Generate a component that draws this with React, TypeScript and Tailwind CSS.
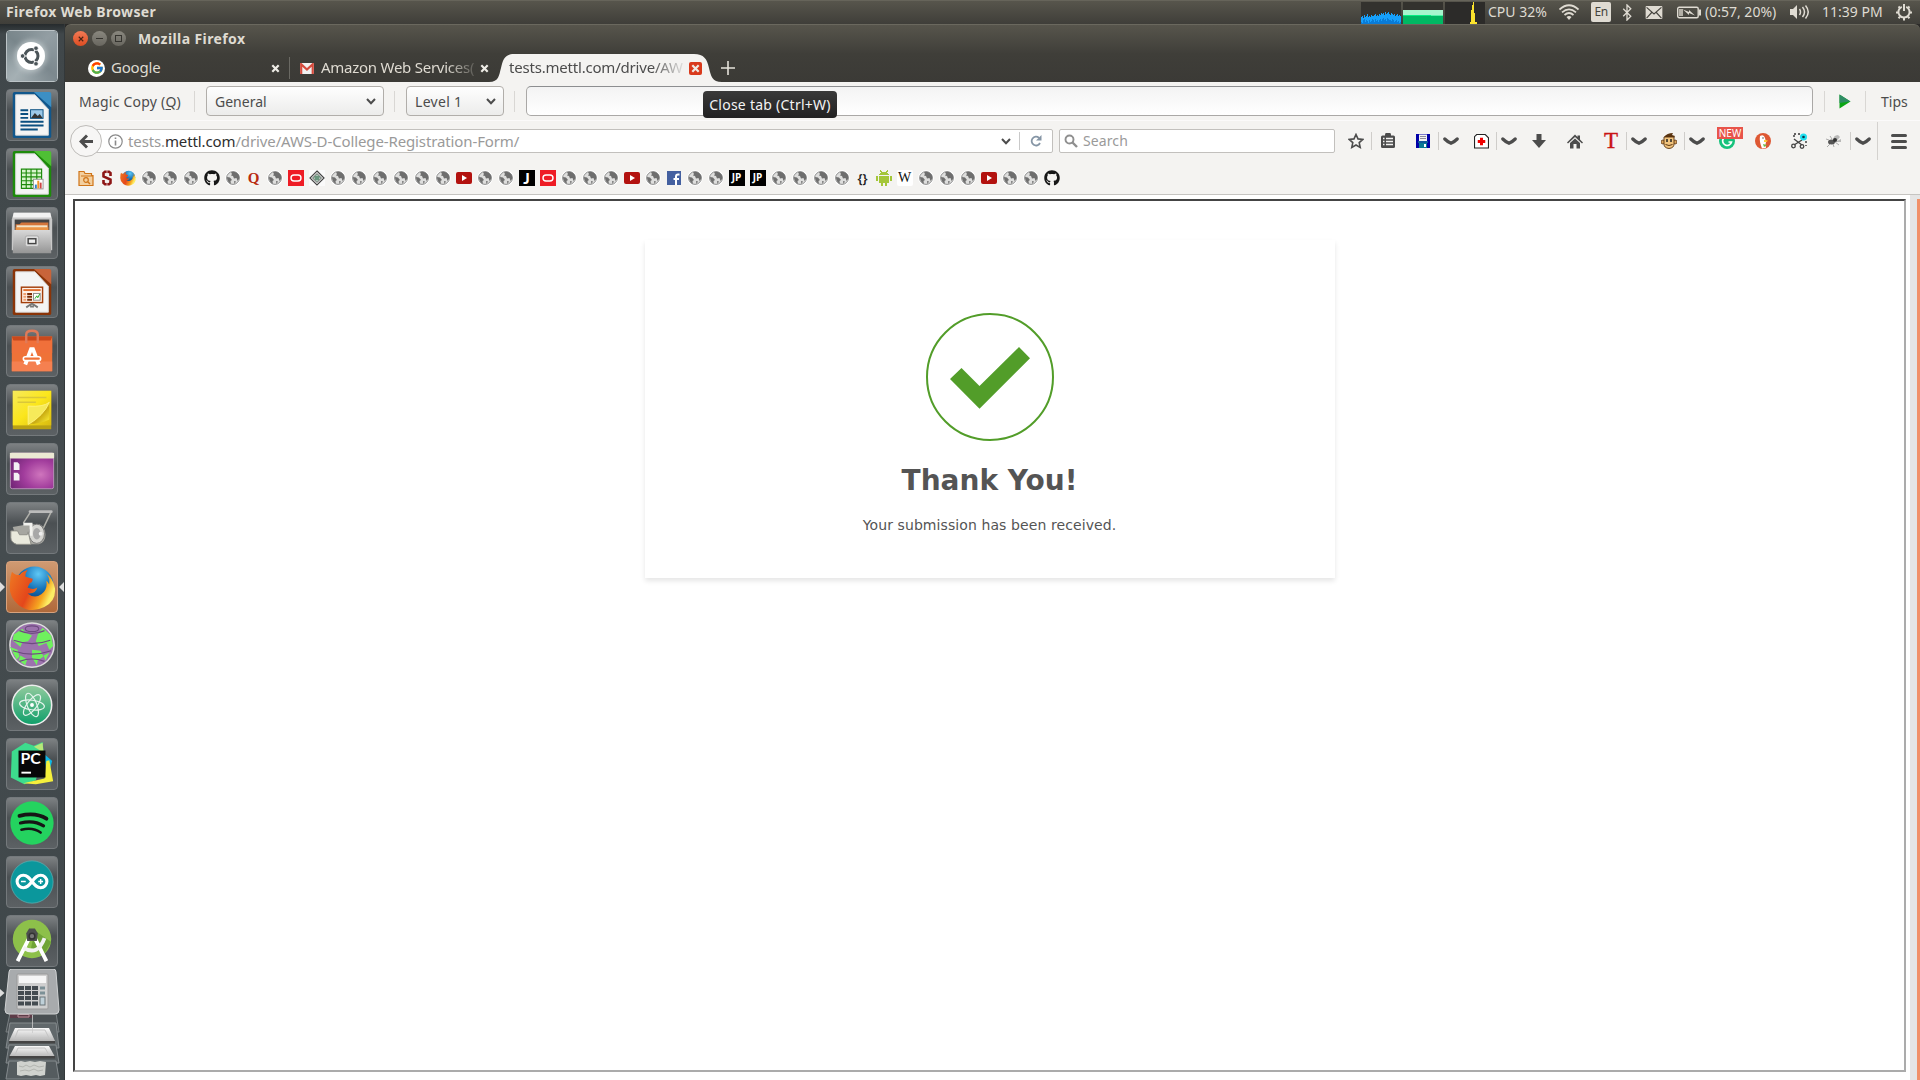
import type { ReactNode } from "react";
import { FcGoogle } from "react-icons/fc";
import { FaGithub } from "react-icons/fa";

const UI = "font-['Noto_Sans',sans-serif] whitespace-nowrap";

/* ---------- launcher artwork (52x52 canvas) ---------- */

function OfficeDoc({ dark, light, children }: { dark: string; light: string; children: ReactNode }) {
  return (
    <svg viewBox="0 0 52 52" className="size-[52px]">
      <path d="M8 2h25l13 14v32q0 2-2 2H8q-2 0-2-2V4q0-2 2-2z" fill={dark} />
      <path d="M28 2h16q2 0 2 2v14z" fill={light} />
      <path d="M9 5h20l14 15v27H9z" fill="#f4f4f4" stroke="#d5d5d5" />
      {children}
    </svg>
  );
}

function Writer() {
  return (
    <OfficeDoc dark="#11578c" light="#3c8fc4">
      <path d="M14 21h8M14 25h8M14 29h8M14 33h24M14 37h24M14 41h18" stroke="#0b4f80" strokeWidth="2" />
      <rect x="24.500" y="20.500" width="13" height="9" fill="#9cc8e8" stroke="#0b4f80" />
      <path d="M25 29l4-5 3 3 2-2 3 4z" fill="#333" />
    </OfficeDoc>
  );
}

function Calc() {
  return (
    <OfficeDoc dark="#1d8a0b" light="#4fbf35">
      <path d="M15 21h21v20H15z" fill="#d8f5cd" />
      <path d="M15 21h21v20H15zM15 25h21M15 29h21M15 33h21M15 37h21M20 21v20M25 21v20M31 21v20" fill="none" stroke="#1d8a0b" strokeWidth="1.200" />
      <rect x="27.500" y="31.500" width="10" height="10" fill="#fff" stroke="#999" />
      <path d="M30 41v-4" stroke="#3080c8" strokeWidth="2" />
      <path d="M32.500 41v-8" stroke="#f0962a" strokeWidth="2" />
      <path d="M35 41v-6" stroke="#c44" strokeWidth="2" />
    </OfficeDoc>
  );
}

function Impress() {
  return (
    <OfficeDoc dark="#8a3408" light="#c8643a">
      <rect x="15" y="21" width="22" height="16" fill="#fff3ea" stroke="#a33e0a" strokeWidth="1.500" />
      <path d="M17 24h18" stroke="#e07030" strokeWidth="2" />
      <path d="M17 28h3M17 31h3M17 34h3" stroke="#f0a070" strokeWidth="2" />
      <path d="M21 28h5M21 31h5M21 34h5" stroke="#7a2b05" strokeWidth="2" />
      <rect x="27.500" y="27.500" width="7" height="7" fill="#fff" stroke="#888" />
      <path d="M29 33l2-3 1 2 2-4" fill="none" stroke="#2a2" />
      <path d="M20 42l6-4 6 4M24 41h4" stroke="#777" strokeWidth="2" fill="none" />
    </OfficeDoc>
  );
}

function Files() {
  return (
    <svg viewBox="0 0 52 52" className="size-[52px]">
      <defs>
        <linearGradient id="cab" x1="0" y1="0" x2="0" y2="1">
          <stop offset="0" stopColor="#d8d8d8" />
          <stop offset="1" stopColor="#959595" />
        </linearGradient>
      </defs>
      <path d="M7 5h38l2 7v32H5V12z" fill="#c9c9c9" />
      <path d="M7 5h38l1 5H6z" fill="#f2f2f2" />
      <rect x="8" y="12" width="36" height="12" fill="#444" />
      <path d="M9 17h4l2-2h28v8H9z" fill="#d3753a" />
      <rect x="10" y="18" width="32" height="4" fill="#f3e4c8" />
      <path d="M9 20h34v3H9z" fill="#eb9445" />
      <path d="M7 23h38l1 24H6z" fill="url(#cab)" />
      <rect x="19" y="29" width="14" height="11" rx="2" fill="#ddd" stroke="#aaa" />
      <rect x="22" y="32" width="8" height="5" fill="#eee" stroke="#444" strokeWidth="1.500" />
    </svg>
  );
}

function Software() {
  return (
    <svg viewBox="0 0 52 52" className="size-[52px]">
      <path d="M5 11h42v36H5z" fill="#ef7238" />
      <path d="M5 11h42l-2 5H7z" fill="#c9481c" />
      <path d="M5 15h42v13H5z" fill="#f0703a" />
      <path d="M5 37h42v10H5z" fill="#f58050" />
      <path d="M20 18V9q0-4 6-4t6 4v9" fill="none" stroke="#e07a58" strokeWidth="2.500" />
      <path d="M19 40l6-16h2l6 16" fill="none" stroke="#fff" strokeWidth="4" />
      <rect x="17" y="32" width="18" height="4" rx="2" fill="#ef7238" stroke="#fff" strokeWidth="1.600" />
    </svg>
  );
}

function Notes() {
  return (
    <svg viewBox="0 0 52 52" className="size-[52px]">
      <defs>
        <linearGradient id="note" x1="0" y1="0" x2="1" y2="1">
          <stop offset="0" stopColor="#f6ea5c" />
          <stop offset="0.500" stopColor="#fbe61c" />
          <stop offset="1" stopColor="#d9bb10" />
        </linearGradient>
        <linearGradient id="curl" x1="0.300" y1="0.300" x2="0.900" y2="0.900">
          <stop offset="0" stopColor="#fdf48e" />
          <stop offset="0.500" stopColor="#c9ab12" />
          <stop offset="1" stopColor="#f6e530" />
        </linearGradient>
      </defs>
      <rect x="6" y="6" width="40" height="40" fill="#b9a114" />
      <rect x="6" y="6" width="40" height="36" fill="url(#note)" />
      <path d="M11 13h30M11 18h19" stroke="#d9c73a" strokeWidth="1.500" />
      <path d="M22 41V22q14 2 22-4v18q-8 4-22 5z" fill="url(#curl)" />
      <path d="M22 41V22q16 1 22-4-6 14-22 23z" fill="#f6ea5a" stroke="#fff27a" />
    </svg>
  );
}

function Desktop() {
  return (
    <svg viewBox="0 0 52 52" className="size-[52px]">
      <defs>
        <radialGradient id="desk" cx="0.700" cy="0.600" r="0.800">
          <stop offset="0" stopColor="#cf75bd" />
          <stop offset="0.500" stopColor="#a13c9c" />
          <stop offset="1" stopColor="#6d2373" />
        </radialGradient>
      </defs>
      <rect x="3.500" y="9.500" width="45" height="37" rx="2" fill="url(#desk)" stroke="#b891b8" />
      <rect x="3" y="9" width="46" height="6" rx="1" fill="#ebe9d3" />
      <path d="M7 19h4l2 2v6H7zM7 30h4l2 2v6H7z" fill="#f3f0f3" />
    </svg>
  );
}

function Scroller() {
  return (
    <svg viewBox="0 0 52 52" className="size-[52px]">
      <path d="M17 21l7-11M35 32l11-23" stroke="#b0b0aa" strokeWidth="1.600" fill="none" />
      <path d="M24 9h22" stroke="#bbb" strokeWidth="3" strokeLinecap="round" />
      <path d="M6 25l16-3h12q6 3 6 11t-7 10H12z" fill="#a6a6a0" />
      <ellipse cx="31" cy="32" rx="8" ry="10" fill="#d6d6d2" stroke="#777" />
      <ellipse cx="31" cy="32" rx="4" ry="6" fill="#a8a8a8" />
      <circle cx="35" cy="32" r="2" fill="#eee" />
      <path d="M4 29h7l2 4h8l1-3 3 13H10q-6-2-6-7z" fill="#e9e9dc" stroke="#8f8f88" />
      <path d="M17 22h8v12" stroke="#f2f2ee" strokeWidth="3" fill="none" />
    </svg>
  );
}

function FirefoxLogo({ className }: { className: string }) {
  return (
    <svg viewBox="0 0 48 48" className={className}>
      <defs>
        <radialGradient id="ffblue" cx="0.600" cy="0.200" r="0.800">
          <stop offset="0" stopColor="#5fc8f5" />
          <stop offset="0.500" stopColor="#1673b9" />
          <stop offset="1" stopColor="#0c2f64" />
        </radialGradient>
        <linearGradient id="ffor" x1="0" y1="0" x2="1" y2="0.400">
          <stop offset="0" stopColor="#ef7a22" />
          <stop offset="0.550" stopColor="#e4471b" />
          <stop offset="0.850" stopColor="#f6a821" />
          <stop offset="1" stopColor="#fcec64" />
        </linearGradient>
      </defs>
      <circle cx="26" cy="22" r="19.500" fill="url(#ffblue)" />
      <path
        d="M3 8q3 4 8 3 3-4 8-5-3 4-2 7l7 2q1 3-3 5l-2 4q6 3 10 0-2 7-10 6 7 6 14 1 7-5 5-14 2 1 3 4 1-7-3-11 7 4 9 15 1 13-11 19-14 7-26-2Q-1 33 1 20q0-7 2-12z"
        fill="url(#ffor)"
      />
    </svg>
  );
}

function TorGlobe() {
  return (
    <svg viewBox="0 0 52 52" className="size-[52px]">
      <circle cx="26" cy="25" r="23" fill="#9c73ad" stroke="#ddd" strokeWidth="1.500" />
      <path d="M7 14l9-6 3 4 7 3-4 6-6 1-2 5-8-7zM32 14l5-7 9 8 2 11-4 4-3-7-8 3-3-5zM3 27l8 3 2 7-3 3zM26 30l9 1 3 6-6 4-1 5-5-8zM14 36l7 4-2 6-7-5zM38 36l6-3-4 8z" fill="#6ff05e" />
      <g fill="none" stroke="#6e4a80" strokeWidth="1.200">
        <path d="M13 10q13 6 26 0M7 20q19 7 38 0M6 31q20 7 40 0M13 42q13-5 26 0" />
        <ellipse cx="26" cy="8" rx="7" ry="3" />
      </g>
    </svg>
  );
}

function AtomIcon() {
  return (
    <svg viewBox="0 0 52 52" className="size-[52px]">
      <defs>
        <linearGradient id="atom" x1="0" y1="0" x2="0" y2="1">
          <stop offset="0" stopColor="#92cb9e" />
          <stop offset="1" stopColor="#0f9f6a" />
        </linearGradient>
      </defs>
      <circle cx="26" cy="26" r="20.500" fill="url(#atom)" stroke="#ededed" strokeWidth="1.600" />
      <g fill="none" stroke="#e4f4ec" strokeWidth="1.200">
        <ellipse cx="26" cy="26" rx="13" ry="5" transform="rotate(8 26 26)" />
        <ellipse cx="26" cy="26" rx="13" ry="5" transform="rotate(68 26 26)" />
        <ellipse cx="26" cy="26" rx="13" ry="5" transform="rotate(128 26 26)" />
      </g>
      <circle cx="26" cy="26" r="2" fill="#fff" />
    </svg>
  );
}

function PyCharm() {
  return (
    <svg viewBox="0 0 52 52" className="size-[52px]">
      <path d="M5 13l14-9 9 3 9-4 1 10-8 30-12 4-14-7z" fill="#3ddc8d" />
      <path d="M28 8l9-4 1 10z" fill="#b7e778" />
      <path d="M38 15l9 8-5 16z" fill="#10b8e8" />
      <path d="M17 46l22-5 2-18 3-1 4 22-18 3z" fill="#f5f03c" />
      <rect x="12" y="12" width="28" height="28" fill="#080808" />
      <text x="14" y="26.500" fontSize="16.500" fontWeight="700" fill="#fff" fontFamily="Lato">PC</text>
      <path d="M15 35h10" stroke="#fff" strokeWidth="2" />
    </svg>
  );
}

function Spotify() {
  return (
    <svg viewBox="0 0 52 52" className="size-[52px]">
      <circle cx="26" cy="26" r="22.500" fill="#24d35f" />
      <g fill="none" stroke="#161616" strokeLinecap="round">
        <path d="M13 18.500q17-4 28 3" strokeWidth="4" />
        <path d="M14 26q14-3.500 24 3" strokeWidth="3.300" />
        <path d="M15 33q12-3 20 3" strokeWidth="2.600" />
      </g>
    </svg>
  );
}

function Arduino() {
  return (
    <svg viewBox="0 0 52 52" className="size-[52px]">
      <circle cx="26" cy="26" r="22" fill="#0b979c" stroke="#5aaeb0" strokeWidth="0.800" />
      <path d="M26 25.500c-3-4-5-6.500-9-6.500a6.500 6.500 0 0 0 0 13c4 0 6-2.500 9-6.500 3-4 5-6.500 9-6.500a6.500 6.500 0 0 1 0 13c-4 0-6-2.500-9-6.500z" fill="none" stroke="#fff" strokeWidth="3.200" />
      <path d="M14.500 25.500h5M32.500 25.500h5M35 23v5" stroke="#fff" strokeWidth="1.500" />
    </svg>
  );
}

function AndroidStudio() {
  return (
    <svg viewBox="0 0 52 52" className="size-[52px]">
      <circle cx="26" cy="24" r="20" fill="#8dc04a" />
      <path d="M29 15l17 12-7 12-14-6z" fill="#6fa336" />
      <path d="M23 23L11 47M29 23l12 24" stroke="#fff" strokeWidth="4" />
      <path d="M17 33q15 9 22-10" stroke="#f2f2f2" strokeWidth="4" fill="none" />
      <path d="M23 13h6l3 5-1 8h-10l-1-8z" fill="#4d4f4e" />
      <circle cx="26" cy="21" r="3" fill="#777" stroke="#333" strokeWidth="1.500" />
    </svg>
  );
}

function Dash() {
  return (
    <div className="flex size-[50px] items-center justify-center bg-[conic-gradient(from_40deg,#939ea3,#7c888e,#a5b0b4,#79868b,#939ea3)]">
      <div className="-ml-[3px] flex size-[28px] items-center justify-center rounded-full bg-white shadow-[0_0_5px_2px_rgba(210,218,220,0.6)]">
        <svg viewBox="0 0 22 22" className="size-[22px]">
          <circle cx="11.500" cy="11" r="6.500" fill="none" stroke="#4b5458" strokeWidth="3" />
          <path d="M11.500 11L3 11M11.500 11l4.500 8M11.500 11l4.500-8" stroke="#fff" strokeWidth="1.200" />
          <g fill="#4b5458" stroke="#fff" strokeWidth="0.800">
            <circle cx="2.600" cy="11" r="2.300" />
            <circle cx="16" cy="3.200" r="2.300" />
            <circle cx="16" cy="18.800" r="2.300" />
          </g>
        </svg>
      </div>
    </div>
  );
}

function FoldedStack() {
  return (
    <svg viewBox="0 0 65 111" className="h-[111px] w-[65px]">
      <defs>
        <linearGradient id="metal" x1="0" y1="0" x2="0" y2="1">
          <stop offset="0" stopColor="#fafafa" />
          <stop offset="1" stopColor="#b4b4b4" />
        </linearGradient>
      </defs>
      <path d="M10 44h46l3 19H6z" fill="#4a5053" stroke="#7a8083" />
      <path d="M10 45h22v4H10z" fill="#5d3c48" />
      <path d="M18 45.500h11v2.500H18z" fill="none" stroke="#b98f9a" />
      <path d="M10 54h46l3 25H6z" fill="#61686b" stroke="#858b8e" />
      <path d="M9 76h47l3 18H6z" fill="#555c5f" stroke="#858b8e" />
      <path d="M9 92h47l3 18H6z" fill="#555c5f" stroke="#858b8e" />
      <path d="M15 59h34l6 13H9z" fill="url(#metal)" />
      <path d="M9 72h46v2.500H9z" fill="#444" />
      <path d="M18 61h27l4 8H15z" fill="none" stroke="#c4c4c4" />
      <path d="M32.500 46v18" stroke="#ccc" strokeWidth="0.800" />
      <path d="M15 77h34l6 11H9z" fill="url(#metal)" />
      <path d="M9 87h46v2.500H9z" fill="#444" />
      <path d="M18 79h27l4 7H15z" fill="none" stroke="#c4c4c4" />
      <path d="M17 93l4-1 4 1 5-1 5 1 5-1 6 1-1 13-5 1-4-1-5 1-5-1-5 1-4-1z" fill="#d0d2ce" />
      <path d="M19 97l4 1 3-2 4 2 4-2 5 2 5-1M20 102l5-1 4 1 5-2 4 2 5-1" stroke="#a9aca7" strokeWidth="0.800" fill="none" />
      <path d="M0 20l4.500 4L0 28z" fill="#ddd" />
      <path d="M9 3q0-3 3-3h41q3 0 3 3l3 38q0 4-4 4H9q-4 0-4-4z" fill="#a8abad" stroke="#cfd1d2" />
      <rect x="17" y="5" width="31" height="35" rx="1" fill="#cfcfcf" stroke="#999" />
      <rect x="19" y="7" width="27" height="7" fill="#f6f6f6" />
      <path d="M18 19h21M18 24h21M18 29h21M18 34.500h21" stroke="#444b50" strokeWidth="3.800" strokeDasharray="6 1" />
      <path d="M40 19h5M40 24h5" stroke="#7c9096" strokeWidth="3" />
      <rect x="40" y="28" width="5" height="8" fill="#bfd0d8" stroke="#6b7478" />
    </svg>
  );
}

const launcher: { name: string; art: ReactNode; active?: boolean }[] = [
  { name: "writer", art: <Writer /> },
  { name: "calc", art: <Calc /> },
  { name: "files", art: <Files /> },
  { name: "impress", art: <Impress /> },
  { name: "software", art: <Software /> },
  { name: "notes", art: <Notes /> },
  { name: "desktop", art: <Desktop /> },
  { name: "scroller", art: <Scroller /> },
  { name: "firefox", art: <FirefoxLogo className="size-[47px]" />, active: true },
  { name: "tor", art: <TorGlobe /> },
  { name: "atom", art: <AtomIcon /> },
  { name: "pycharm", art: <PyCharm /> },
  { name: "spotify", art: <Spotify /> },
  { name: "arduino", art: <Arduino /> },
  { name: "studio", art: <AndroidStudio /> },
];

function Launcher() {
  return (
    <aside className="flex h-[1056px] w-[65px] shrink-0 flex-col overflow-hidden border-r border-[#33383a] bg-[linear-gradient(#262b2d,#40474a_10px,#454c4f_50%,#3e4649)] pt-[6px]">
      <div className="mb-[7px] ml-[6px] size-[52px] shrink-0 overflow-hidden rounded-[4px] border border-[#bcc4c7]">
        <Dash />
      </div>
      {launcher.map((item) => (
        <div key={item.name} className="relative mb-[7px] h-[52px] w-[64px] shrink-0 pl-[6px]">
          {item.active && (
            <svg viewBox="0 0 65 52" className="absolute left-0 top-0 h-[52px] w-[65px]">
              <path d="M0 21l5 5-5 5zM64 21l-5 5 5 5z" fill="#dedede" />
            </svg>
          )}
          <div
            className={
              item.active
                ? "flex size-[52px] items-center justify-center rounded-[4px] border border-[#d8a27d] bg-[linear-gradient(#cf9a72,#b0693a)]"
                : "flex size-[52px] items-center justify-center rounded-[4px] border border-[#74797c] bg-[linear-gradient(#7d8183,#4b5053_40%,#5c6164)]"
            }
          >
            {item.art}
          </div>
        </div>
      ))}
      <div className="-mt-[5px] h-[111px] w-[65px] shrink-0"><FoldedStack /></div>
    </aside>
  );
}

/* ---------- top panel ---------- */

const cpuBars = [8, 9, 7, 10, 8, 9, 11, 8, 9, 8, 10, 9, 9, 10, 11, 9, 10, 9, 11, 10, 12, 11, 12, 10, 13, 11, 12, 13, 11, 10, 12, 11, 10, 11, 9, 10, 11, 9, 10, 9];
const cpuDark = [3, 2, 5, 6, 3, 5, 4, 2, 5, 3, 4, 6, 5, 3, 6, 4, 5, 3, 5, 6, 4, 6, 7, 5, 6, 4, 7, 6, 5, 5, 4, 6, 5, 3, 4, 5, 3, 4, 2, 3];

function PanelGraphs() {
  return (
    <div className="flex gap-[2px]">
      <svg viewBox="0 0 40 22" className="h-[22px] w-[40px] bg-[#33322e]" shapeRendering="crispEdges">
        {cpuBars.map((h, i) => (
          <rect key={i} x={i} y={22 - h + 1} width="1" height={h} fill="#16a0fb" />
        ))}
        {cpuDark.map((h, i) => (
          <rect key={i} x={i} y={22 - h + 1} width="1" height={h} fill="#0a7bd6" />
        ))}
      </svg>
      <svg viewBox="0 0 40 22" className="h-[22px] w-[40px] bg-[#33322e]">
        <rect y="8" width="40" height="14" fill="#a6f5cd" />
        <rect y="13" width="28" height="2" fill="#06ee83" />
        <rect x="28" y="13.500" width="12" height="1.500" fill="#06ee83" />
        <rect y="14" width="40" height="8" fill="#00b863" />
      </svg>
      <svg viewBox="0 0 40 22" className="h-[22px] w-[40px] bg-[#2c2b29]">
        <path d="M25 22v-2h1V8h1V3h1V0h1v11h1v9h2v2z" fill="#fbe32d" />
      </svg>
    </div>
  );
}

function TopPanel() {
  return (
    <header className="flex h-[24px] items-center border-t border-[#66645a] bg-[linear-gradient(#57554c,#3f3e39)] text-[#dfdbd2]">
      <span className={`${UI} -mt-[2px] ml-[6px] text-[14px] leading-[20px] font-bold tracking-[0.36px]`}>Firefox Web Browser</span>
      <div className="ml-auto flex w-[559px] items-center">
        <PanelGraphs />
        <span className={`${UI} -mt-[2px] ml-[3px] w-[71px] text-[14px] leading-[20px]`}>CPU 32%</span>
        <svg viewBox="0 0 20 18" className="-mt-px h-[18px] w-[20px]" fill="none" stroke="#dfdbd2" strokeWidth="1.700">
          <path d="M0.500 6.500q9.500-8.500 19 0M3 9.300q7-6 14 0M5.500 12q4.500-4 9 0" />
          <path d="M7.500 14q2.500-2 5 0L10 17z" fill="#dfdbd2" stroke="none" />
        </svg>
        <span className={`${UI} -mt-px ml-[12px] flex h-[20px] w-[20px] items-center justify-center rounded-[2px] bg-[#dfdbd2] text-[12px] tracking-[-0.5px] text-[#45433d]`}>En</span>
        <svg viewBox="0 0 10 18" className="-mt-px ml-[11px] h-[17px] w-[10px]" fill="none" stroke="#dfdbd2" strokeWidth="1.400">
          <path d="M1 5l8 8-4 4V1l4 4-8 8" />
        </svg>
        <svg viewBox="0 0 18 14" className="-mt-px ml-[13px] h-[13px] w-[18px]">
          <rect width="18" height="14" rx="1" fill="#dfdbd2" />
          <path d="M1 1.500l8 7 8-7M1 13l5.500-6M17 13l-5.500-6" fill="none" stroke="#45433d" strokeWidth="1.200" />
        </svg>
        <svg viewBox="0 0 24 12" className="-mt-px ml-[14px] h-[13px] w-[24px]">
          <rect x="0.700" y="0.700" width="20.500" height="10.600" rx="1.500" fill="none" stroke="#dfdbd2" strokeWidth="1.400" />
          <rect x="22" y="3" width="2" height="6" fill="#dfdbd2" />
          <rect x="2" y="2.500" width="4" height="7" fill="#dfdbd2" opacity="0.700" />
          <path d="M6 3l6 2.500 0-2L18 9l-6-2.500v2z" fill="#dfdbd2" />
        </svg>
        <span className={`${UI} -mt-[2px] ml-[4px] w-[85px] text-[14px] leading-[20px]`}>(0:57, 20%)</span>
        <svg viewBox="0 0 20 16" className="-mt-px h-[16px] w-[20px]">
          <path d="M0 5h3l4-4v14l-4-4H0z" fill="#dfdbd2" />
          <path d="M9.500 5q2 3 0 6M12.500 3q4 5 0 10M15.500 1.500q5.500 6.500 0 13" fill="none" stroke="#dfdbd2" strokeWidth="1.500" />
        </svg>
        <span className={`${UI} -mt-[2px] ml-[12px] w-[73px] text-[14px] leading-[20px]`}>11:39 PM</span>
        <svg viewBox="0 0 18 18" className="-mt-px size-[18px]" fill="none" stroke="#dfdbd2">
          <path d="M6.800 3.800a5.600 5.600 0 1 0 4.400 0" strokeWidth="2" />
          <path d="M9 1v7" strokeWidth="2" />
          <path d="M3.500 3.500l1.500 1.500M14.500 3.500L13 5M1 9.500h2.500M17 9.500h-2.500M3.500 15.300L5 13.700M14.500 15.300L13 13.700M9 15v2.500" strokeWidth="2" />
        </svg>
      </div>
    </header>
  );
}

/* ---------- window chrome ---------- */

function TitleBar() {
  return (
    <div className="flex h-[30px] items-center rounded-t-[6px] border-t border-[#6a685e] bg-[linear-gradient(#57554c,#3f3e39)] pb-[2px] pl-[8px]">
      <div className="flex gap-[4px]">
        <span className="flex size-[15px] items-center justify-center rounded-full bg-[linear-gradient(#f37a55,#dd4d22)]">
          <svg viewBox="0 0 8 8" className="size-[6px]"><path d="M1 1l6 6M7 1L1 7" stroke="#4a2416" strokeWidth="1.500" /></svg>
        </span>
        <span className="flex size-[15px] items-center justify-center rounded-full bg-[linear-gradient(#8a887f,#68665f)]">
          <i className="block h-px w-[7px] bg-[#35342f]" />
        </span>
        <span className="flex size-[15px] items-center justify-center rounded-full bg-[linear-gradient(#8a887f,#68665f)]">
          <i className="block size-[7px] border border-[#35342f]" />
        </span>
      </div>
      <span className={`${UI} ml-[12px] text-[14px] leading-[22px] font-bold tracking-[0.4px] text-[#dfdbd2]`}>Mozilla Firefox</span>
    </div>
  );
}

function CloseX() {
  return (
    <svg viewBox="0 0 9 9" className="size-[9px]"><path d="M1.300 1.300l6.400 6.400M7.700 1.300L1.300 7.700" stroke="#eeece6" strokeWidth="2.200" /></svg>
  );
}

function TabStrip() {
  return (
    <div className="flex h-[28px] items-center bg-[linear-gradient(#3f3e39,#3b3a36)] text-[#dfdbd2]">
      <div className="flex h-[28px] w-[224px] items-center pl-[23px]">
        <span className="flex size-[17px] items-center justify-center rounded-full bg-white"><FcGoogle size={14} /></span>
        <span className={`${UI} ml-[6px] pb-[2px] text-[15px] leading-[22px] tracking-[-0.2px]`}>Google</span>
        <span className="ml-auto mr-[9px]"><CloseX /></span>
      </div>
      <i className="block h-[22px] w-px bg-[#6a6963]" />
      <div className="flex h-[28px] w-[199px] items-center pl-[10px]">
        <svg viewBox="0 0 14 11" className="h-[11px] w-[14px]">
          <rect width="14" height="11" rx="1" fill="#f1f1f1" />
          <path d="M1.200 11V1.200L7 6.500l5.800-5.300V11" fill="none" stroke="#d54b3d" strokeWidth="2.200" />
        </svg>
        <span className={`${UI} ml-[7px] w-[155px] pb-[2px] text-[15px] leading-[22px] tracking-[-0.25px] [mask-image:linear-gradient(90deg,#000_125px,transparent_160px)]`}>Amazon Web Services(</span>
        <span className="ml-[5px]"><CloseX /></span>
      </div>
      <div className="relative h-[28px] w-[232px]">
        <svg viewBox="0 0 234 28" className="absolute left-0 top-0 h-[28px] w-[234px]">
          <path d="M0 28c10 0 10-7 12-14C14 5 16 0 25 0h180c10 0 13 5 15 14 2 8 3 14 13 14z" fill="#f4f3f1" />
        </svg>
        <div className="relative flex h-[28px] items-center pl-[20px]">
          <span className={`${UI} w-[175px] pb-[2px] text-[15px] leading-[22px] tracking-[-0.2px] text-[#4c4c4c] [mask-image:linear-gradient(90deg,#000_143px,transparent_178px)]`}>tests.mettl.com/drive/AW</span>
          <span className="ml-[5px] flex size-[13px] items-center justify-center rounded-[2px] bg-[#d93a1c]"><CloseX /></span>
        </div>
      </div>
      <svg viewBox="0 0 14 14" className="size-[14px]"><path d="M7 0v14M0 7h14" stroke="#e5e2da" strokeWidth="1.600" /></svg>
    </div>
  );
}

function Sep() {
  return <i className="block h-[21px] w-px bg-[#d9d7d4]" />;
}

function Chevron() {
  return (
    <svg viewBox="0 0 10 7" className="h-[7px] w-[10px]"><path d="M1 1l4 4.300L9 1" fill="none" stroke="#4c4c4c" strokeWidth="2" /></svg>
  );
}

const comboClass =
  "flex h-[30px] items-center justify-between rounded-[4px] border border-[#b1aeaa] bg-[linear-gradient(#fefefe,#ececeb)] pl-[8px] pr-[7px]";

function MagicBar() {
  return (
    <div className={`${UI} flex h-[39px] items-center border-b border-[#fbfafa] text-[14px] text-[#4c4c4c]`}>
      <span className="ml-[14px] w-[115px] tracking-[0.22px]">Magic Copy (<u className="underline-offset-2">Q</u>)</span>
      <Sep />
      <div className={`${comboClass} ml-[11px] w-[178px]`}>General<Chevron /></div>
      <span className="ml-[10px]"><Sep /></span>
      <div className={`${comboClass} ml-[11px] w-[98px]`}><span className="tracking-[0.3px]">Level 1</span><Chevron /></div>
      <span className="ml-[10px]"><Sep /></span>
      <div className="relative ml-[11px] h-[30px] w-[1287px] rounded-[5px] border border-[#aaa8a6] border-t-[#8d8e90] bg-[linear-gradient(#f3f3f3,#fff)]">
        <div className="absolute left-[176px] top-[4px] z-10 flex h-[27px] w-[134px] items-center justify-center rounded-[4px] bg-[linear-gradient(#3a3a3a,#212121)] text-[14px] tracking-[0.25px] text-[#f4f4f4]">
          Close tab (Ctrl+W)
        </div>
      </div>
      <span className="ml-[11px]"><Sep /></span>
      <svg viewBox="0 0 12 15" className="ml-[14px] h-[15px] w-[12px]">
        <path d="M0.500 0.500L11.500 7.500 0.500 14.500z" fill="#0aa514" />
        <path d="M0.500 0.500L11.500 7.500 0.500 9z" fill="#2f8c66" />
      </svg>
      <span className="ml-[14px]"><Sep /></span>
      <span className="ml-[15px]">Tips</span>
    </div>
  );
}

const ink = "#4c4c4c";

function BigChevron() {
  return (
    <svg viewBox="0 0 16 9" className="h-[9px] w-[16px]"><path d="M1.800 2Q5 5.200 8 6.200 11 5.200 14.200 2" fill="none" stroke={ink} strokeWidth="3.200" strokeLinecap="round" /></svg>
  );
}

function DropSlot() {
  return (
    <>
      <i className="block h-[18px] w-px bg-[#cfcdca]" />
      <span className="flex w-[23px] justify-center"><BigChevron /></span>
    </>
  );
}

function Slot({ w, children }: { w: string; children: ReactNode }) {
  return <span className={`flex shrink-0 items-center justify-center ${w}`}>{children}</span>;
}

function ToolIcons() {
  return (
    <div className="flex items-center">
      <Slot w="w-[31px]">
        <svg viewBox="0 0 16 16" className="size-[16px]"><path d="M8 1.500l2 4.400 4.800.5-3.600 3.200 1 4.800L8 12l-4.200 2.400 1-4.800L1.200 6.400 6 5.900z" fill="none" stroke={ink} strokeWidth="1.600" /></svg>
      </Slot>
      <i className="block h-[18px] w-px bg-[#cfcdca]" />
      <Slot w="w-[31px]">
        <svg viewBox="0 0 14 16" className="h-[16px] w-[14px]">
          <path d="M4 3V1.500q0-1.500 1-1.500h4q1 0 1 1.500V3z" fill={ink} />
          <rect x="0" y="2.500" width="14" height="12.500" rx="1.500" fill={ink} />
          <path d="M2 5.500h1.500M5 5.500h7M2 8.500h1.500M5 8.500h7M2 11.500h1.500M5 11.500h7" stroke="#f4f3f1" strokeWidth="1.700" />
        </svg>
      </Slot>
      <Slot w="w-[35px]">
        <svg viewBox="0 0 14 14" className="ml-[5px] size-[14px]">
          <rect width="14" height="14" fill="#0000a8" />
          <rect x="3" y="0.500" width="8" height="6.500" fill="#f2f2f2" />
          <path d="M4 2.500h6M4 4.500h6" stroke="#8a8a9a" />
          <path d="M2 7.500h10v1H2z" fill="#23b08a" />
          <rect x="3" y="9" width="8" height="5" fill="#0a7a94" />
          <rect x="8" y="10" width="2" height="3" fill="#fff" />
        </svg>
      </Slot>
      <DropSlot />
      <Slot w="w-[34px]">
        <svg viewBox="0 0 14 14" className="ml-[4px] size-[15px]">
          <path d="M2.500.5h8l3 3v9.500h-13V2.500z" fill="#fff" stroke="#222" />
          <path d="M7 3.500v7M3.500 7h7" stroke="#f00000" strokeWidth="2.800" />
        </svg>
      </Slot>
      <DropSlot />
      <Slot w="w-[38px]">
        <svg viewBox="0 0 14 14" className="size-[14px]"><path d="M4.500 0h5v6H14l-7 8-7-8h4.500z" fill={ink} /></svg>
      </Slot>
      <Slot w="w-[34px]">
        <svg viewBox="0 0 16 14" className="h-[15px] w-[16px]">
          <path d="M0 8l8-8 2.500 2.500V1h2.500v4L16 8l-1 1-7-6.500L1 9z" fill={ink} />
          <path d="M3 8.500l5-4.500 5 4.500V14H9.500v-4.500h-3V14H3z" fill={ink} />
        </svg>
      </Slot>
      <Slot w="w-[34px]">
        <span className="ml-[4px] font-['Liberation_Serif',serif] text-[23px] leading-[20px] text-[#c91414] [-webkit-text-stroke:0.4px_#c91414]">T</span>
      </Slot>
      <DropSlot />
      <Slot w="w-[34px]">
        <svg viewBox="0 0 16 16" className="ml-[4px] size-[16px]">
          <path d="M3 4Q6 0 12 0L11 2l3 1-1 2z" fill="#5a3410" />
          <circle cx="2" cy="9" r="2" fill="#d9a35a" stroke="#5a3410" strokeWidth="0.800" />
          <circle cx="14" cy="9" r="2" fill="#d9a35a" stroke="#5a3410" strokeWidth="0.800" />
          <path d="M3 4h10v7q0 4-5 4.500-5-.5-5-4.500z" fill="#f1c47e" stroke="#5a3410" strokeWidth="0.900" />
          <path d="M6 6v3M10 6v3" stroke="#222" strokeWidth="1.500" />
          <path d="M4.500 11.500q3.500 2 7 0" stroke="#5a3410" fill="none" />
        </svg>
      </Slot>
      <DropSlot />
      <Slot w="w-[38px]">
        <span className="relative ml-[6px] block h-[28px] w-[26px]">
          <svg viewBox="0 0 16 16" className="absolute left-[2px] top-[6px] size-[16px]">
            <circle cx="8" cy="8" r="8" fill="#15c27c" />
            <path d="M11.500 5A4.500 4.500 0 1 0 12.500 9H9.500" fill="none" stroke="#fff" strokeWidth="1.700" />
          </svg>
          <span className={`${UI} absolute left-0 top-0 flex h-[12px] w-[26px] items-center justify-center bg-[#e8544a] text-[10px] text-white`}>NEW</span>
        </span>
      </Slot>
      <Slot w="w-[34px]">
        <svg viewBox="0 0 16 16" className="size-[16px]">
          <circle cx="8" cy="8" r="8" fill="#de5833" />
          <path d="M5 3q4-2 5 2l1 4q-1 2 0 6l-4 .5Q4 8 5 3z" fill="#fff" />
          <path d="M9 7l4 .5-1.500 1.500H9z" fill="#fc3" />
          <path d="M8 11l4 1-3 2z" fill="#67bd47" />
          <circle cx="8" cy="5" r="0.700" fill="#333" />
        </svg>
      </Slot>
      <Slot w="w-[38px]">
        <svg viewBox="0 0 16 16" className="size-[16px]">
          <path d="M3 1h7M15 8v5M3 2v4" stroke="#333" strokeWidth="1.400" strokeDasharray="2 2" />
          <path d="M3 6l8 6M11 7l-8 5" stroke="#444" strokeWidth="1.400" />
          <circle cx="2.500" cy="13" r="1.800" fill="none" stroke="#444" strokeWidth="1.300" />
          <circle cx="11" cy="13.500" r="1.800" fill="none" stroke="#444" strokeWidth="1.300" />
          <circle cx="12.500" cy="4" r="3.500" fill="#1fdff0" />
          <circle cx="12.500" cy="4" r="1.300" fill="#134" />
        </svg>
      </Slot>
      <Slot w="w-[32px]">
        <svg viewBox="0 0 16 14" className="h-[14px] w-[16px]">
          <path d="M7 7q0-6 5-6l2 2-4 5zM9 8l6-3v3z" fill="#aaa" opacity="0.800" />
          <ellipse cx="5.500" cy="8" rx="3.500" ry="2.500" fill="#555" />
          <circle cx="9" cy="6" r="2" fill="#333" />
          <path d="M3 6L0 5M4 10l-3 3M7 10l1 3M9 8l4 3M6 5L4 2" stroke="#999" strokeWidth="0.800" />
        </svg>
      </Slot>
      <DropSlot />
    </div>
  );
}

function NavBar() {
  return (
    <div className="flex h-[40px] items-center text-[#4c4c4c]">
      <div className="z-10 ml-[5px] flex size-[32px] items-center justify-center rounded-full border border-[#bebcb9] bg-[#f7f6f5]">
        <svg viewBox="0 0 15 15" className="size-[15px]"><path d="M14 7.500H3M8 1.500L2 7.500l6 6" fill="none" stroke={ink} strokeWidth="2.900" /></svg>
      </div>
      <div className="-ml-[6px] flex h-[24px] w-[957px] items-center rounded-r-[2px] border border-[#c2c0bd] bg-white">
        <svg viewBox="0 0 15 15" className="ml-[11px] size-[15px]">
          <circle cx="7.500" cy="7.500" r="6.700" fill="none" stroke="#8a8a8a" strokeWidth="1.200" />
          <path d="M7.500 6.500v5M7.500 3.500v1.600" stroke="#8a8a8a" strokeWidth="1.600" />
        </svg>
        <span className={`${UI} ml-[5px] w-[873px] text-[15px] leading-[20px] tracking-[-0.12px] text-[#9a9a9a]`}>
          tests.<span className="text-[#2e2e2e]">mettl.com</span>/drive/AWS-D-College-Registration-Form/
        </span>
        <Chevron />
        <i className="ml-[8px] block h-[18px] w-px bg-[#c9c9c9]" />
        <svg viewBox="0 0 12 12" className="ml-[10px] size-[12px]">
          <path d="M10 8A4.400 4.400 0 1 1 9 2.800" fill="none" stroke="#8595a5" strokeWidth="1.800" />
          <path d="M11.500 0v5.500H6z" fill="#8595a5" />
        </svg>
      </div>
      <div className="ml-[6px] flex h-[24px] w-[276px] items-center rounded-[2px] border border-[#c2c0bd] bg-white">
        <svg viewBox="0 0 14 14" className="ml-[4px] size-[14px]" fill="none" stroke="#8f8f8f">
          <circle cx="5.500" cy="5.500" r="4" strokeWidth="1.900" />
          <path d="M8.500 8.500l4.500 4.500" strokeWidth="2.400" />
        </svg>
        <span className={`${UI} ml-[5px] text-[14px] leading-[20px] tracking-[0.1px] text-[#9a9a9a]`}>Search</span>
      </div>
      <div className="ml-[5px]"><ToolIcons /></div>
      <i className="ml-[3px] block h-[38px] w-px bg-[#d4d2cf]" />
      <div className="ml-[13px] flex w-[16px] flex-col gap-[3px]">
        <i className="block h-[3px] rounded-full bg-[#4c4c4c]" />
        <i className="block h-[3px] rounded-full bg-[#4c4c4c]" />
        <i className="block h-[3px] rounded-full bg-[#4c4c4c]" />
      </div>
    </div>
  );
}

/* ---------- bookmarks ---------- */

function Favicon({ kind }: { kind: string }) {
  switch (kind) {
    case "folder":
      return (
        <svg viewBox="0 0 16 16" className="size-[16px]">
          <path d="M1 3V1.500h5l1 2h6.500v2H15v10H1z" fill="#f3cf9f" stroke="#cf7418" strokeWidth="1.200" />
          <path d="M3 6h12" stroke="#cf7418" />
          <circle cx="8" cy="10" r="2.300" fill="none" stroke="#cf7418" strokeWidth="1.200" />
          <path d="M10 12l2 2" stroke="#cf7418" strokeWidth="1.500" />
        </svg>
      );
    case "stanford":
      return (
        <svg viewBox="0 0 16 16" className="size-[16px]">
          <path d="M11.500 6V3L10 1.700H6L4.500 3v3.500l7 3V13L10 14.300H6L4.500 13v-3" fill="none" stroke="#8c1515" strokeWidth="2.600" />
          <path d="M8 0v3.500M8 12.500V16" stroke="#e9c9c9" strokeWidth="0.800" />
        </svg>
      );
    case "firefox":
      return <FirefoxLogo className="size-[16px]" />;
    case "github":
      return <FaGithub size={16} color="#171717" />;
    case "quora":
      return <span className="font-['Liberation_Serif',serif] text-[15px] leading-[16px] font-bold text-[#b92b10]">Q</span>;
    case "oracle":
      return (
        <svg viewBox="0 0 16 16" className="size-[16px]">
          <rect width="16" height="16" fill="#ee1c25" />
          <rect x="3" y="5" width="10" height="6" rx="3" fill="none" stroke="#fff" strokeWidth="1.400" />
        </svg>
      );
    case "diamond":
      return (
        <svg viewBox="0 0 16 16" className="size-[16px]">
          <rect width="16" height="16" fill="#fafafa" />
          <path d="M8 1l7 7-7 7-7-7z" fill="#fff" stroke="#444" strokeWidth="1.200" />
          <path d="M8 3.500L12.500 8 8 12.500 3.500 8z" fill="#a8c4b4" stroke="#444" strokeWidth="0.800" />
          <path d="M5.500 7h5M6 9h4" stroke="#2f6b4a" />
        </svg>
      );
    case "youtube":
      return (
        <svg viewBox="0 0 16 16" className="size-[16px]">
          <rect y="2" width="16" height="12" rx="2" fill="#b3120f" />
          <path d="M6 5l5 3-5 3z" fill="#fff" />
        </svg>
      );
    case "j":
      return <span className="flex size-[16px] items-center justify-center bg-black font-['Lato',sans-serif] text-[15px] leading-[16px] font-black text-white">J</span>;
    case "jp":
      return <span className="flex size-[16px] items-center justify-center bg-black pb-[2px] font-['Open_Sans',sans-serif] text-[10px] leading-[12px] font-bold text-white">JP</span>;
    case "facebook":
      return (
        <svg viewBox="0 0 14 14" className="size-[14px]">
          <rect width="14" height="14" fill="#4460a0" />
          <path d="M9 14V5.500q0-2 2-2h1.500M6.500 8H12" fill="none" stroke="#fff" strokeWidth="2" />
        </svg>
      );
    case "braces":
      return <span className="font-['Noto_Sans',sans-serif] text-[13px] leading-[14px] font-semibold text-[#222]">{"{}"}</span>;
    case "android":
      return (
        <svg viewBox="0 0 16 16" className="size-[16px]" fill="#a4c639" shapeRendering="crispEdges">
          <path d="M3 5h10v-1h-1V3h-1V2h1V0h-1v1h-1v1H6V1H5V0H4v2h1v1H4v1H3zM3 6h10v7h-2v3H9v-3H7v3H5v-3H3zM0 6h2v5H0zM14 6h2v5h-2z" />
        </svg>
      );
    case "wikipedia":
      return <span className="flex size-[16px] items-center justify-center rounded-[2px] bg-white font-['Liberation_Serif',serif] text-[14px] leading-[16px] text-[#111]">W</span>;
    default:
      return (
        <svg viewBox="0 0 16 16" className="size-[16px]">
          <circle cx="8" cy="8" r="7.800" fill="#fff" />
          <circle cx="8" cy="8" r="6.400" fill="#dededd" stroke="#8e8e8e" strokeWidth="1" />
          <path d="M6 2.200Q9 .8 12 3t2 6l-1.500 2-1-3-2.500.5L8 6 6 5.500l1-1.500z" fill="#6e6e6e" />
          <path d="M2 7l3 .500L7 10l-1.500 1L6 14Q2 12 2 7zM9 11l2 .500-1.500 2.500z" fill="#707070" />
        </svg>
      );
  }
}

const g = (n: number) => Array<string>(n).fill("globe");
const bookmarks = [
  "folder", "stanford", "firefox", ...g(3), "github", ...g(1), "quora", ...g(1), "oracle", "diamond", ...g(6),
  "youtube", ...g(2), "j", "oracle", ...g(3), "youtube", ...g(1), "facebook", ...g(2), "jp", "jp", ...g(4),
  "braces", "android", "wikipedia", ...g(3), "youtube", ...g(2), "github",
];

function BookmarksBar() {
  return (
    <div className="flex h-[34px] items-center border-b border-[#c6c4c1] pl-[10px]">
      {bookmarks.map((kind, i) => (
        <span key={i} className="flex w-[21px] items-center justify-center"><Favicon kind={kind} /></span>
      ))}
    </div>
  );
}

/* ---------- page ---------- */

function ConfirmationCard() {
  return (
    <section className="mt-[39px] flex h-[338px] w-[690px] flex-col items-center bg-white pt-[73px] font-['DejaVu_Sans',sans-serif] text-[#545454] shadow-[0_3px_5px_rgba(0,0,0,0.1)]">
      <svg viewBox="0 0 128 128" className="size-[128px]">
        <circle cx="64" cy="64" r="63" fill="none" stroke="#529d29" strokeWidth="2" />
        <path d="M35.500 55L53.500 73 93 34 104 45.300 53.500 95.700 24 66z" fill="#529d29" />
      </svg>
      <h1 className="mt-[23px] text-[28px] leading-[34px] font-bold">Thank You!</h1>
      <p className="mt-[17px] text-[14px] leading-[20px] tracking-[0.09px]">Your submission has been received.</p>
    </section>
  );
}

export default function App() {
  return (
    <div className="flex h-[1080px] w-[1920px] flex-col overflow-hidden bg-[#2b2a28]">
      <TopPanel />
      <div className="flex">
        <Launcher />
        <main className="flex h-[1056px] w-[1855px] flex-col">
          <TitleBar />
          <TabStrip />
          <div className="bg-[#f4f3f1]">
            <MagicBar />
            <NavBar />
            <BookmarksBar />
          </div>
          <div className="flex flex-1 bg-white">
            <div className="ml-[8px] mt-[4px] flex h-[873px] w-[1833px] flex-col items-center border-2 border-[#ababab] border-l-[#444] border-t-[#444]">
              <ConfirmationCard />
            </div>
            <div className="ml-[4px] flex w-[10px] justify-end bg-[#e5e5e5] pt-[4px]">
              <i className="block w-[3px] bg-[#f19069]" />
            </div>
          </div>
        </main>
      </div>
    </div>
  );
}
